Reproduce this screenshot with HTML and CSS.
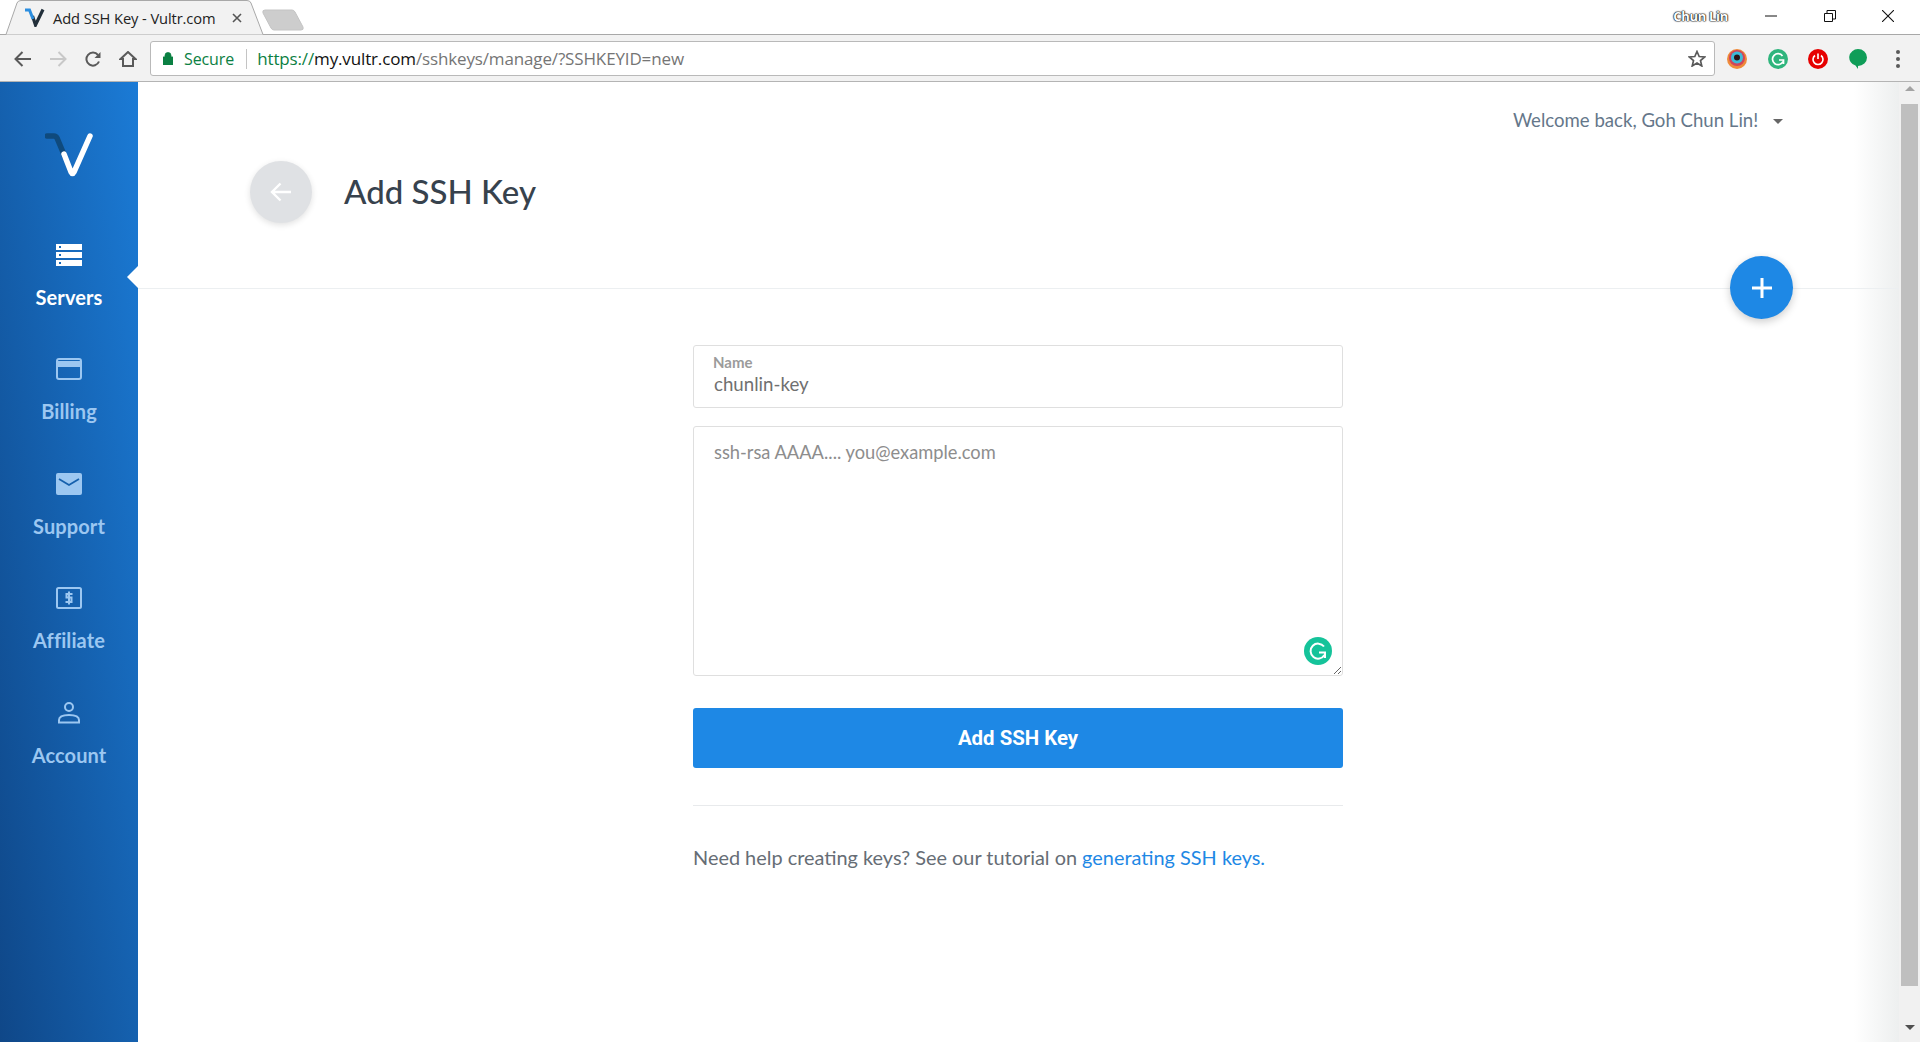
FILE: index.html
```html
<!doctype html>
<html lang="en">
<head>
    <meta charset="UTF-8">
    <title>Add SSH Key - Vultr.com</title>
    <link rel="stylesheet" href="styles.css">
</head>
<body>
<div class="tabstrip">
    <div class="tab">
        <svg class="tab-shape" width="270" height="35" viewBox="0 0 270 35">
            <path d="M0 34.5H6L17 3Q18 .5 21 .5H247Q250 .5 251 3L263 34.5H270" fill="#f2f2f2" stroke="#a8a8a8"/>
        </svg>
        <svg class="favicon" width="20" height="19" viewBox="0 0 20 19">
            <path d="M7.500 8L10.500 17L18 1.500" fill="none" stroke="#222f3a" stroke-width="3.200"/>
            <path d="M0 2H4.500L8 11" fill="none" stroke="#2b8ee0" stroke-width="3"/>
        </svg>
        <span class="tab-title">Add SSH Key - Vultr.com</span>
        <svg class="tab-close" width="10" height="10" viewBox="0 0 10 10">
            <path d="M1 1L9 9M9 1L1 9" stroke="#555" stroke-width="1.600"/>
        </svg>
    </div>
    <svg class="newtab" width="42" height="22" viewBox="0 0 42 22">
        <path d="M3 1H30Q32 1 33 3L41 18Q42 21 39 21H12Q10 21 9 19L1 4Q0 1 3 1Z" fill="#cdcdcd" stroke="#c4c4c4"/>
    </svg>
    <div class="user-name">Chun Lin</div>
    <div class="winbtns">
        <svg width="12" height="2" viewBox="0 0 12 2"><path d="M0 1H12" stroke="#111" stroke-width="1"/></svg>
        <svg width="12" height="12" viewBox="0 0 12 12"><path d="M.5 3.500H8.500V11.500H.5ZM3 3.500V.5H11.500V9H8.500" fill="none" stroke="#111"/></svg>
        <svg width="12" height="12" viewBox="0 0 12 12"><path d="M0 0L12 12M12 0L0 12" stroke="#111" stroke-width="1.100"/></svg>
    </div>
</div>

<div class="toolbar">
    <div class="navbtns">
        <svg width="18" height="16" viewBox="0 0 18 16"><path d="M17 8H2M8.500 1L1.500 8L8.500 15" fill="none" stroke="#5a5a5a" stroke-width="2"/></svg>
        <svg width="18" height="16" viewBox="0 0 18 16"><path d="M1 8H16M9.500 1L16.500 8L9.500 15" fill="none" stroke="#c8c8c8" stroke-width="2"/></svg>
        <svg width="18" height="16" viewBox="0 0 18 16"><path d="M15 10.500A6.500 6.500 0 1 1 14 4" fill="none" stroke="#5a5a5a" stroke-width="2"/><path d="M16.500 1V7H10.500Z" fill="#5a5a5a"/></svg>
        <svg width="18" height="16" viewBox="0 0 18 16"><path d="M1.500 8L9 1L16.500 8H14V15H4V8Z" fill="none" stroke="#5a5a5a" stroke-width="2"/></svg>
    </div>
    <div class="addressbar">
        <svg class="lock" width="10" height="13" viewBox="0 0 10 13"><path d="M0 5H10V13H0ZM2 5V3.500A3 3 0 0 1 8 3.500V5" fill="#0b8043" stroke="#0b8043" stroke-width=".8"/></svg>
        <span class="secure">Secure</span>
        <span class="url"><span class="scheme">https://</span><span class="host">my.vultr.com</span>/sshkeys/manage/?SSHKEYID=new</span>
        <svg class="star" width="18" height="17" viewBox="0 0 18 17"><path d="M9 1.500L11.200 6.500L16.700 7L12.500 10.600L13.800 16L9 13.100L4.200 16L5.500 10.600L1.300 7L6.800 6.500Z" fill="none" stroke="#5a5a5a" stroke-width="1.700"/></svg>
    </div>
    <div class="extensions">
        <svg width="20" height="20" viewBox="0 0 20 20"><circle cx="10" cy="10" r="10" fill="#ef8b3a"/><circle cx="10" cy="9" r="8" fill="#d0455b"/><circle cx="10" cy="8.500" r="6" fill="#3dbbd8"/><circle cx="10" cy="8.500" r="3" fill="#2a1518"/></svg>
        <svg width="20" height="20" viewBox="0 0 20 20"><circle cx="10" cy="10" r="10" fill="#2fb57d"/><path d="M14.500 7A5.500 5.500 0 1 0 15 12.500M11 11H15.500V15" fill="none" stroke="#fff" stroke-width="1.700"/></svg>
        <svg width="20" height="20" viewBox="0 0 20 20"><circle cx="10" cy="10" r="10" fill="#e60000"/><path d="M7 6.500A5 5 0 1 0 13 6.500M10 4.500V10" fill="none" stroke="#fff" stroke-width="1.600"/></svg>
        <svg width="18" height="20" viewBox="0 0 18 20"><path d="M9 0A9 8.500 0 0 1 9 17L9 20L6.500 16.600A9 8.500 0 0 1 9 0Z" fill="#0f9d58"/></svg>
    </div>
    <div class="menu-dots"><i></i><i></i><i></i></div>
</div>

<div class="page">
    <nav class="sidebar">
        <div class="logo">
            <svg width="48" height="46" viewBox="0 0 48 46">
                <path d="M2 3H9Q11 3 12 5L20 24" fill="none" stroke="#0f4a7d" stroke-width="5.500" stroke-linecap="round"/>
                <path d="M19 21L26 39Q27.500 42 29 39L45 3" fill="none" stroke="#fff" stroke-width="5.500" stroke-linecap="round"/>
            </svg>
        </div>
        <a class="nav-item active" href="#">
            <svg width="26" height="22" viewBox="0 0 26 22"><path fill-rule="evenodd" d="M0 0H26V6H0ZM3 2V4H5V2ZM0 8H26V14H0ZM3 10V12H5V10ZM0 16H26V22H0ZM3 18V20H5V18Z" fill="currentColor"/></svg>
            <span>Servers</span>
        </a>
        <a class="nav-item" href="#">
            <svg width="26" height="22" viewBox="0 0 26 22"><rect x="1" y="1" width="24" height="20" rx="2" fill="none" stroke="currentColor" stroke-width="2"/><rect x="1" y="3" width="24" height="6" fill="currentColor"/></svg>
            <span>Billing</span>
        </a>
        <a class="nav-item" href="#">
            <svg width="26" height="22" viewBox="0 0 26 22"><rect width="26" height="22" rx="2" fill="currentColor"/><path d="M3 6L13 12L23 6" fill="none" stroke="#1560ad" stroke-width="1.800"/></svg>
            <span>Support</span>
        </a>
        <a class="nav-item" href="#">
            <svg width="26" height="22" viewBox="0 0 26 22"><rect x="1" y="1" width="24" height="20" rx="1.500" fill="none" stroke="currentColor" stroke-width="2"/><path d="M16.500 7H10.500V10.500H15.500V15H9.500M13 4.500V17.500" fill="none" stroke="currentColor" stroke-width="2"/></svg>
            <span>Affiliate</span>
        </a>
        <a class="nav-item" href="#">
            <svg width="22" height="22" viewBox="0 0 22 22"><circle cx="11" cy="5" r="4" fill="none" stroke="currentColor" stroke-width="2"/><path d="M1 20.500V18Q1 13 11 13T21 18V20.500Z" fill="none" stroke="currentColor" stroke-width="2"/></svg>
            <span>Account</span>
        </a>
    </nav>

    <main class="main">
        <header class="header">
            <div class="welcome">Welcome back, Goh Chun Lin! <span class="caret"></span></div>
            <div class="title-row">
                <a class="back-btn" href="#">
                    <svg width="22" height="20" viewBox="0 0 22 20"><path d="M21 10H2M10.500 1.500L2 10L10.500 18.500" fill="none" stroke="#fff" stroke-width="2.400"/></svg>
                </a>
                <h1>Add SSH Key</h1>
            </div>
            <a class="fab" href="#">
                <svg width="20" height="20" viewBox="0 0 20 20"><path d="M10 0V20M0 10H20" stroke="#fff" stroke-width="3"/></svg>
            </a>
        </header>

        <form class="key-form">
            <label class="name-field">
                <span>Name</span>
                <input type="text" value="chunlin-key">
            </label>
            <div class="key-field">
                <textarea placeholder="ssh-rsa AAAA.... you@example.com"></textarea>
                <svg class="grammarly" width="28" height="28" viewBox="0 0 28 28"><circle cx="14" cy="14" r="14" fill="#15c39a"/><path d="M20 9.500A7.500 7.500 0 1 0 20.500 18M15 15.500H21V21" fill="none" stroke="#fff" stroke-width="2"/></svg>
            </div>
            <button type="button" class="submit">Add SSH Key</button>
            <hr>
            <p class="help">Need help creating keys? See our tutorial on <a href="#">generating SSH keys.</a></p>
        </form>
        <div class="scroll-shade"></div>
    </main>

    <div class="scrollbar">
        <i class="arrow-up"></i>
        <div class="thumb"></div>
        <i class="arrow-down"></i>
    </div>
</div>
</body>
</html>
```

FILE: styles.css
```css
* {
    box-sizing: border-box;
}

html, body {
    height: 100%;
}

body {
    margin: 0;
    overflow: hidden;
    display: flex;
    flex-direction: column;
    font-family: "Lato", "Open Sans", sans-serif;
    color: #444;
    background: #fff;
}

a {
    text-decoration: none;
}

/* browser chrome */
.tabstrip {
    height: 35px;
    flex: none;
    display: flex;
    align-items: flex-start;
    background: #fff;
    border-bottom: 1px solid #a8a8a8;
    font-family: "Open Sans", sans-serif;
}

.tab {
    position: relative;
    width: 262px;
    height: 35px;
    padding-left: 25px;
    display: flex;
    align-items: center;
    flex: none;
}

.tab-shape {
    position: absolute;
    left: 0;
    top: 0;
}

.favicon, .tab-title, .tab-close {
    position: relative;
}

.tab-title {
    margin-left: 8px;
    font-size: 14.700px;
    color: #222;
    width: 179px;
    white-space: nowrap;
    letter-spacing: -.1px;
}

.newtab {
    margin-top: 9px;
    margin-left: 0;
}

.user-name {
    margin-left: auto;
    margin-top: 6px;
    font-size: 13px;
    line-height: 20px;
    color: #fff;
    font-weight: 700;
    letter-spacing: -.3px;
    text-shadow: 0 0 1px #111, 0 0 1px #111, 0 0 1px #111, 0 0 2px #333;
}

.winbtns {
    width: 192px;
    height: 32px;
    padding: 0 26px 0 37px;
    display: flex;
    align-items: center;
    justify-content: space-between;
}

.toolbar {
    height: 47px;
    flex: none;
    padding: 6px 15px 5px 14px;
    display: flex;
    align-items: center;
    background: #f2f2f2;
    border-bottom: 1px solid #b4b4b4;
    font-family: "Open Sans", sans-serif;
}

.navbtns {
    width: 136px;
    display: flex;
    gap: 17px;
    flex: none;
}

.addressbar {
    width: 1565px;
    height: 35px;
    padding: 0 8px 0 12px;
    display: flex;
    align-items: center;
    background: #fff;
    border: 1px solid #b9b9b9;
    border-radius: 3px;
    font-size: 16px;
    flex: none;
}

.lock {
    flex: none;
}

.secure {
    margin-left: 11px;
    padding-right: 12px;
    border-right: 1px solid #c4c4c4;
    line-height: 20px;
    color: #0b8043;
    letter-spacing: -.1px;
}

.url {
    margin-left: 10px;
    color: #757575;
    font-size: 17px;
    white-space: nowrap;
    letter-spacing: -.14px;
}

.scheme {
    color: #0b8043;
}

.host {
    color: #111;
}

.star {
    margin-left: auto;
}

.extensions {
    margin-left: 12px;
    width: 140px;
    display: flex;
    justify-content: space-between;
    align-items: center;
    flex: none;
}

.menu-dots {
    margin-left: 29px;
    display: flex;
    flex-direction: column;
    gap: 3px;
}

.menu-dots i {
    width: 4px;
    height: 4px;
    border-radius: 50%;
    background: #5a5a5a;
}

/* page */
.page {
    flex: 1;
    min-height: 0;
    display: flex;
}

.sidebar {
    width: 138px;
    flex: none;
    background: linear-gradient(to top right, #0f4788, #1b7bd6);
}

.logo {
    height: 161.600px;
    padding: 51px 0 0 45px;
}

.nav-item {
    position: relative;
    height: 114.500px;
    display: flex;
    flex-direction: column;
    align-items: center;
    color: #9cc7f1;
    font-size: 20px;
    font-weight: 700;
}

.nav-item span {
    margin-top: 19px;
    line-height: 24px;
    letter-spacing: .1px;
}

.nav-item.active {
    color: #fff;
}

.nav-item.active::after {
    content: "";
    position: absolute;
    right: 0;
    top: 22px;
    border: 11px solid transparent;
    border-left: 0;
    border-right-color: #fff;
}

.main {
    position: relative;
    flex: 1;
    min-width: 0;
}

.header {
    position: relative;
    z-index: 1;
    height: 207px;
    padding: 26px 116px 0 112px;
    border-bottom: 1px solid #eceff1;
}

.welcome {
    text-align: right;
    font-size: 18.600px;
    line-height: 24px;
    color: #65778a;
    font-weight: 400;
}

.caret {
    display: inline-block;
    margin-left: 10px;
    vertical-align: 3px;
    border: 5px solid transparent;
    border-bottom: 0;
    border-top-color: #666;
}

.title-row {
    margin-top: 29px;
    display: flex;
    align-items: center;
    gap: 32px;
}

.back-btn {
    width: 62px;
    height: 62px;
    display: flex;
    align-items: center;
    justify-content: center;
    border-radius: 50%;
    background: #dfe1e4;
    box-shadow: 0 2px 6px rgba(0, 0, 0, .12);
}

h1 {
    margin: 0 0 2px;
    font-size: 33px;
    font-weight: 500;
    color: #37424d;
}

.fab {
    position: absolute;
    right: 106px;
    top: 174px;
    width: 63px;
    height: 63px;
    display: flex;
    align-items: center;
    justify-content: center;
    border-radius: 50%;
    background: #1e88e5;
    box-shadow: 0 3px 8px rgba(0, 0, 0, .2);
}

.key-form {
    width: 650px;
    margin: 56px 0 0 555px;
}

.name-field {
    height: 63px;
    padding: 8px 20px 0;
    display: block;
    border: 1px solid #dfdfdf;
    border-radius: 3px;
}

.name-field span {
    display: block;
    margin-left: -1px;
    font-size: 15px;
    line-height: 16px;
    font-weight: 700;
    color: #9b9b9b;
}

.name-field input {
    width: 100%;
    height: 26px;
    margin-top: 1px;
    padding: 0;
    border: 0;
    outline: 0;
    font: 18.700px "Lato", sans-serif;
    color: #707070;
}

.key-field {
    position: relative;
    height: 250px;
    margin-top: 18px;
}

.key-field textarea {
    width: 100%;
    height: 100%;
    display: block;
    padding: 13px 20px;
    border: 1px solid #dfdfdf;
    border-radius: 3px;
    outline: 0;
    font: 18.300px/24px "Lato", sans-serif;
}

.key-field textarea::placeholder {
    color: #8d8d8d;
    opacity: 1;
}

.grammarly {
    position: absolute;
    right: 11px;
    bottom: 11px;
}

.submit {
    width: 100%;
    height: 60px;
    margin-top: 32px;
    padding-bottom: 2px;
    display: block;
    border: 0;
    border-radius: 3px;
    background: #1e88e5;
    color: #fff;
    font: 700 20.400px "Roboto", sans-serif;
}

hr {
    margin: 37px 0 0;
    border: 0;
    border-top: 1px solid #e8eaec;
}

.help {
    margin: 39px 0 0;
    font-size: 19.900px;
    line-height: 25px;
    color: #666d75;
    white-space: nowrap;
}

.help a {
    color: #1e88e5;
}

.scroll-shade {
    position: absolute;
    right: 0;
    top: 0;
    bottom: 0;
    width: 45px;
    background: linear-gradient(to right, rgba(238, 240, 240, 0), #edefef);
    pointer-events: none;
}

.scrollbar {
    width: 21px;
    flex: none;
    display: flex;
    flex-direction: column;
    align-items: center;
    background: #f1f1f1;
}

.arrow-up, .arrow-down {
    width: 0;
    height: 0;
    border: 5px solid transparent;
    flex: none;
}

.arrow-up {
    margin-top: 4px;
    border-top: 0;
    border-bottom-color: #a3a3a3;
}

.arrow-down {
    margin-top: 39px;
    border-bottom: 0;
    border-top-color: #505050;
}

.thumb {
    width: 17px;
    height: 882px;
    margin-top: 13px;
    background: #bfbfbf;
}
```
